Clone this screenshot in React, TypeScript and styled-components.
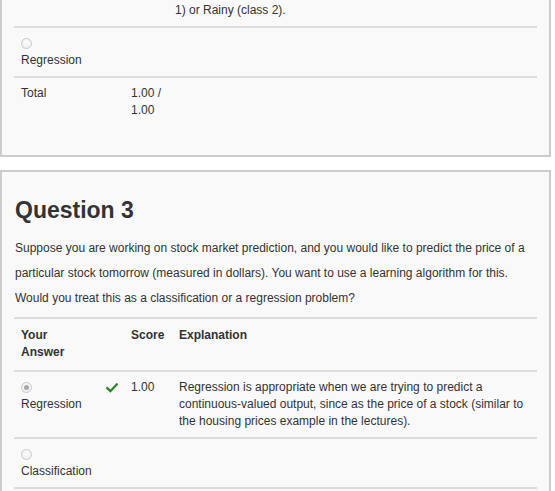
import React from "react";
import styled, { createGlobalStyle } from "styled-components";

const GlobalStyle = createGlobalStyle`
  html, body {
    margin: 0;
    padding: 0;
    background: #ffffff;
  }
  body {
    font-family: "Liberation Sans", Arial, Helvetica, sans-serif;
    font-size: 12px;
    line-height: 17px;
    color: #333333;
  }
`;

const Page = styled.main`
  width: 551px;
  display: flex;
  flex-direction: column;
  gap: 13px;
`;

const Panel = styled.section<{ $cut?: boolean }>`
  box-sizing: border-box;
  width: 551px;
  background: #f9f9f9;
  border: 2px solid #cccccc;
  ${(p) => (p.$cut ? "border-top: none;" : "")}
  padding: ${(p) => (p.$cut ? "0 12px 29px" : "26px 12px 29px")};
`;

const Heading = styled.h2`
  margin: 0 0 13px 1px;
  font-size: 23px;
  line-height: 25px;
  font-weight: bold;
  color: #333333;
`;

const Prompt = styled.p`
  margin: 0 0 6px 1px;
  font-size: 12px;
  line-height: 25px;
`;

const Table = styled.div`
  display: flex;
  flex-direction: column;
`;

const Row = styled.div<{ $cols: string; $noLine?: boolean }>`
  display: grid;
  grid-template-columns: ${(p) => p.$cols};
  border-top: ${(p) => (p.$noLine ? "none" : "2px solid #dddddd")};
`;

const HeadRow = styled(Row)`
  font-weight: bold;
  & > div {
    padding-top: 8px;
    padding-bottom: 9px;
  }
`;

const Cell = styled.div<{ $top?: number }>`
  padding: ${(p) => (p.$top ?? 7)}px 7px 7px 7px;
  min-width: 0;
`;

const RadioLine = styled.div`
  height: 17px;
  display: flex;
  align-items: center;
`;

const Radio = styled.span<{ $checked?: boolean }>`
  box-sizing: border-box;
  width: 11px;
  height: 11px;
  border-radius: 50%;
  border: 1px solid #c9c9c9;
  background: radial-gradient(circle at 50% 35%, #fbfbfb 0%, #ececec 100%);
  display: flex;
  align-items: center;
  justify-content: center;
  &::after {
    content: "";
    display: ${(p) => (p.$checked ? "block" : "none")};
    width: 5px;
    height: 5px;
    border-radius: 50%;
    background: #a8a8a8;
  }
`;

const Label = styled.div`
  white-space: nowrap;
`;

const CheckCell = styled.div`
  padding: 7px 0 7px 6px;
  height: 17px;
  display: flex;
  align-items: center;
`;

const ScoreLine = styled.div`
  white-space: nowrap;
`;

const Check = () => (
  <svg width="12" height="10" viewBox="0 0 12 10" aria-hidden="true">
    <path
      d="M1.3 5.2 L4.4 8.2 L10.8 1.4"
      fill="none"
      stroke="#2a862a"
      strokeWidth="2.3"
      strokeLinecap="square"
      strokeLinejoin="miter"
    />
  </svg>
);

const COLS1 = "86px 24px 44px 1fr";
const COLS2 = "86px 24px 48px 364px";

type AnswerProps = { label: string; checked?: boolean };

const Answer = ({ label, checked }: AnswerProps) => (
  <Cell>
    <RadioLine>
      <Radio $checked={checked} />
    </RadioLine>
    <Label>{label}</Label>
  </Cell>
);

export default function App() {
  return (
    <>
      <GlobalStyle />
      <Page>
        <Panel $cut>
          <Table>
            <Row $cols={COLS1} $noLine>
              <Cell $top={2} />
              <Cell $top={2} />
              <Cell $top={2} />
              <Cell $top={2}>1) or Rainy (class 2).</Cell>
            </Row>
            <Row $cols={COLS1}>
              <Answer label="Regression" />
              <Cell />
              <Cell />
              <Cell />
            </Row>
            <Row $cols={COLS1}>
              <Cell>Total</Cell>
              <Cell />
              <Cell>
                <ScoreLine>1.00 /</ScoreLine>
                <ScoreLine>1.00</ScoreLine>
              </Cell>
              <Cell />
            </Row>
          </Table>
        </Panel>

        <Panel>
          <Heading>Question 3</Heading>
          <Prompt>
            Suppose you are working on stock market prediction, and you would like to predict the
            price of a particular stock tomorrow (measured in dollars). You want to use a learning
            algorithm for this. Would you treat this as a classification or a regression problem?
          </Prompt>
          <Table>
            <HeadRow $cols={COLS2}>
              <Cell>Your Answer</Cell>
              <Cell />
              <Cell>Score</Cell>
              <Cell>Explanation</Cell>
            </HeadRow>
            <Row $cols={COLS2}>
              <Answer label="Regression" checked />
              <CheckCell>
                <Check />
              </CheckCell>
              <Cell>1.00</Cell>
              <Cell>
                Regression is appropriate when we are trying to predict a continuous-valued
                output, since as the price of a stock (similar to the housing prices example in
                the lectures).
              </Cell>
            </Row>
            <Row $cols={COLS2}>
              <Answer label="Classification" />
              <Cell />
              <Cell />
              <Cell />
            </Row>
            <Row $cols={COLS2}>
              <Cell>Total</Cell>
              <Cell />
              <Cell>
                <ScoreLine>1.00 /</ScoreLine>
                <ScoreLine>1.00</ScoreLine>
              </Cell>
              <Cell />
            </Row>
          </Table>
        </Panel>
      </Page>
    </>
  );
}
